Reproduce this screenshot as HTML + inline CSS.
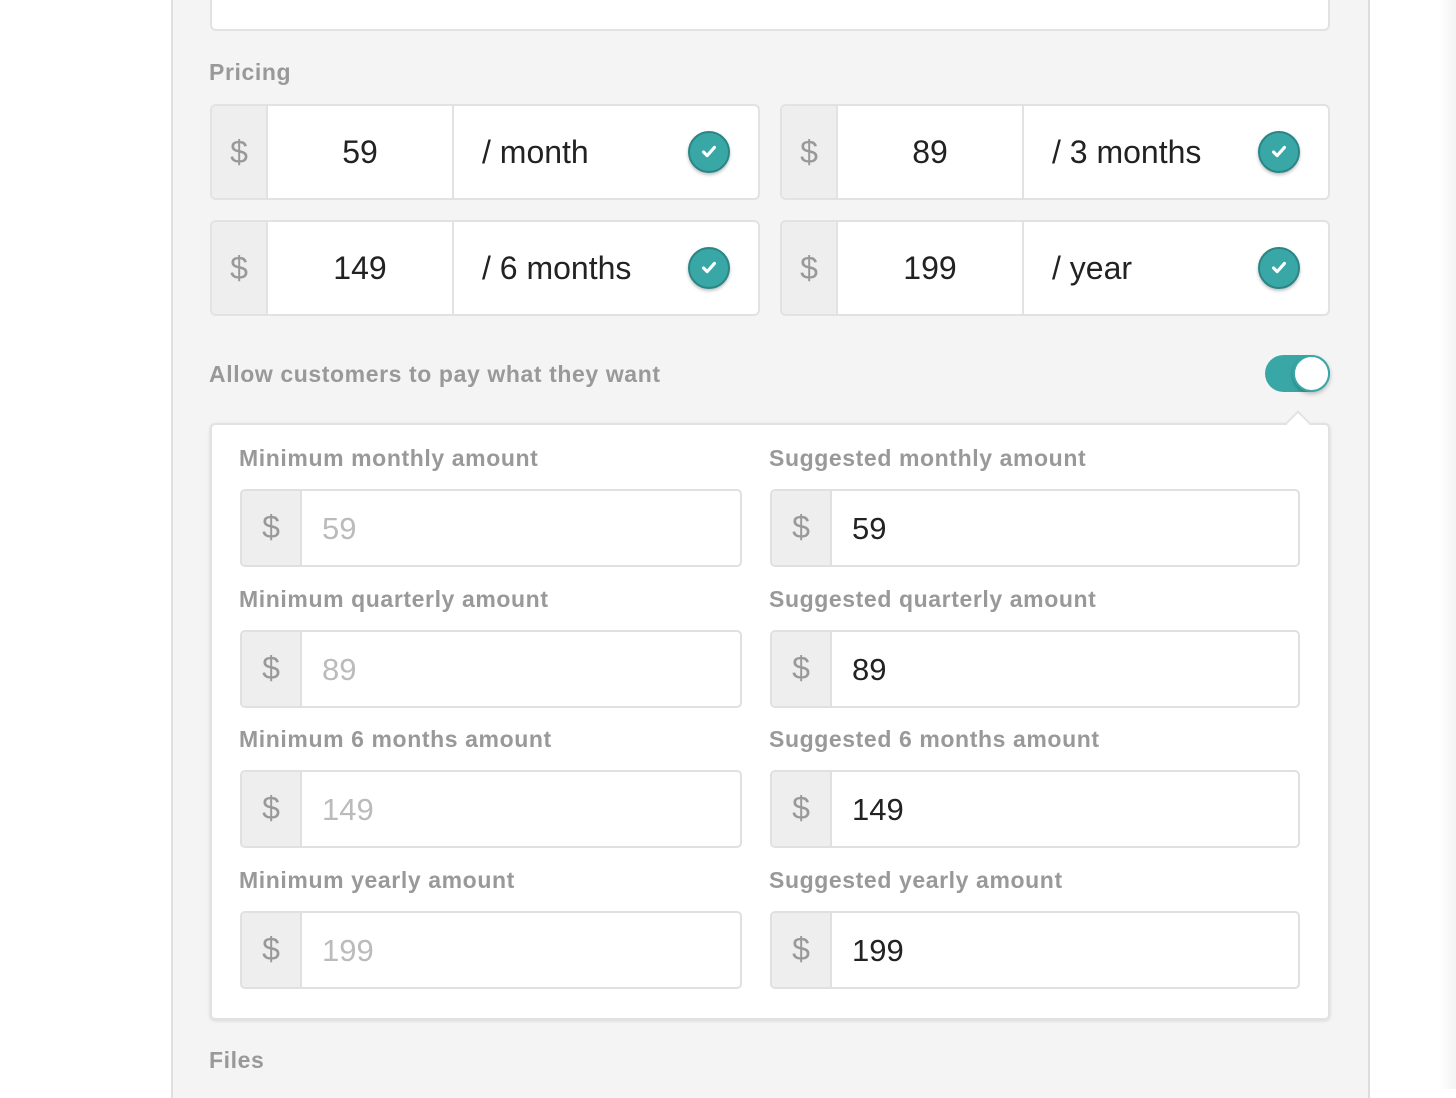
<!DOCTYPE html>
<html><head><style>
*{box-sizing:border-box;margin:0;padding:0}
body{width:1456px;height:1089px;background:#fff;position:relative;overflow:hidden;font-family:"Liberation Sans",Arial,sans-serif}
.abs{position:absolute}
.panel{left:171px;top:-2px;width:1199px;height:1100px;background:#f4f4f4;border-left:2px solid #e0e0e0;border-right:2px solid #dcdcdc}
.lbl{color:#999;font-weight:bold;font-size:23px;letter-spacing:0.6px}
.card{background:#fff;border:2px solid #e2e2e2;border-radius:6px;overflow:hidden;height:96px;width:550px}
.card .pre{position:absolute;left:0;top:0;width:56px;height:100%;background:#eeeeee;border-right:2px solid #e2e2e2;color:#999;font-size:32px;text-align:center;line-height:92px}
.card .num{position:absolute;left:56px;top:0;width:186px;height:100%;border-right:2px solid #e2e2e2;text-align:center;font-size:32px;line-height:92px;color:#222}
.card .unit{position:absolute;left:270px;top:0;font-size:32px;line-height:92px;color:#222}
.chk{position:absolute;right:28px;top:25px;width:42px;height:42px;border-radius:50%;background:#3aa7a7;border:2px solid #2a8686;box-shadow:0 2px 3px rgba(0,0,0,.25)}
.field{position:absolute;width:502px;height:78px;background:#fff;border:2px solid #e0e0e0;border-radius:5px;overflow:hidden}
.field .pre{position:absolute;left:0;top:0;width:60px;height:100%;background:#eeeeee;border-right:2px solid #e0e0e0;color:#999;font-size:32px;text-align:center;line-height:72px}
.field .v{position:absolute;left:80px;top:0;font-size:31px;line-height:76px;color:#222}
.field .v.ph{color:#bbb}
.sl{position:absolute;color:#999;font-weight:bold;font-size:23px;letter-spacing:0.6px}
</style></head><body>
<div class="abs panel"></div>
<div class="abs" style="left:210px;top:-20px;width:1120px;height:51px;background:#fff;border:2px solid #e2e2e2;border-radius:6px"></div>
<div class="abs lbl" style="left:209px;top:59px">Pricing</div>

<div class="abs card" style="left:210px;top:104px"><div class="pre">$</div><div class="num">59</div><div class="unit">/ month</div><svg class="chk" viewBox="0 0 42 42"><path d="M15 21l4 4 8-9" stroke="#fff" stroke-width="3.5" fill="none" stroke-linecap="round" stroke-linejoin="round"/></svg></div>
<div class="abs card" style="left:780px;top:104px"><div class="pre">$</div><div class="num">89</div><div class="unit">/ 3 months</div><svg class="chk" viewBox="0 0 42 42"><path d="M15 21l4 4 8-9" stroke="#fff" stroke-width="3.5" fill="none" stroke-linecap="round" stroke-linejoin="round"/></svg></div>
<div class="abs card" style="left:210px;top:220px"><div class="pre">$</div><div class="num">149</div><div class="unit">/ 6 months</div><svg class="chk" viewBox="0 0 42 42"><path d="M15 21l4 4 8-9" stroke="#fff" stroke-width="3.5" fill="none" stroke-linecap="round" stroke-linejoin="round"/></svg></div>
<div class="abs card" style="left:780px;top:220px"><div class="pre">$</div><div class="num">199</div><div class="unit">/ year</div><svg class="chk" viewBox="0 0 42 42"><path d="M15 21l4 4 8-9" stroke="#fff" stroke-width="3.5" fill="none" stroke-linecap="round" stroke-linejoin="round"/></svg></div>

<div class="abs lbl" style="left:209px;top:361px">Allow customers to pay what they want</div>
<div class="abs" style="left:1265px;top:355px;width:65px;height:37px;border-radius:19px;background:#3aa7a7"></div>
<div class="abs" style="left:1293px;top:355px;width:37px;height:37px;border-radius:50%;background:#fff;border:2px solid #3aa7a7;box-shadow:0 2px 4px rgba(0,0,0,.25)"></div>

<div class="abs" style="left:210px;top:423px;width:1120px;height:597px;background:#fff;border:2px solid #e2e2e2;border-radius:5px;box-shadow:0 1px 3px rgba(0,0,0,.12)"></div>
<div class="abs" style="left:1289px;top:414px;width:18px;height:18px;background:#fff;border-left:2px solid #e2e2e2;border-top:2px solid #e2e2e2;transform:rotate(45deg)"></div>

<div class="sl" style="left:239px;top:445px">Minimum monthly amount</div>
<div class="sl" style="left:769px;top:445px">Suggested monthly amount</div>
<div class="field" style="left:240px;top:489px"><div class="pre">$</div><div class="v ph">59</div></div>
<div class="field" style="left:770px;top:489px;width:530px"><div class="pre">$</div><div class="v">59</div></div>

<div class="sl" style="left:239px;top:586px">Minimum quarterly amount</div>
<div class="sl" style="left:769px;top:586px">Suggested quarterly amount</div>
<div class="field" style="left:240px;top:630px"><div class="pre">$</div><div class="v ph">89</div></div>
<div class="field" style="left:770px;top:630px;width:530px"><div class="pre">$</div><div class="v">89</div></div>

<div class="sl" style="left:239px;top:726px">Minimum 6 months amount</div>
<div class="sl" style="left:769px;top:726px">Suggested 6 months amount</div>
<div class="field" style="left:240px;top:770px"><div class="pre">$</div><div class="v ph">149</div></div>
<div class="field" style="left:770px;top:770px;width:530px"><div class="pre">$</div><div class="v">149</div></div>

<div class="sl" style="left:239px;top:867px">Minimum yearly amount</div>
<div class="sl" style="left:769px;top:867px">Suggested yearly amount</div>
<div class="field" style="left:240px;top:911px"><div class="pre">$</div><div class="v ph">199</div></div>
<div class="field" style="left:770px;top:911px;width:530px"><div class="pre">$</div><div class="v">199</div></div>

<div class="abs lbl" style="left:209px;top:1047px">Files</div>
<div class="abs" style="left:1440px;top:0;width:16px;height:1089px;background:linear-gradient(to right,#fff,#f3f3f3)"></div>
</body></html>
